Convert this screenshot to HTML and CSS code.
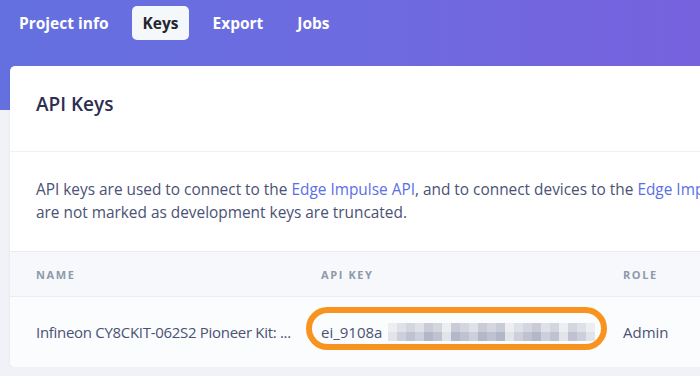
FILE: index.html
```html
<!DOCTYPE html>
<html lang="en">
<head>
  <meta charset="UTF-8" />
  <meta name="viewport" content="width=device-width, initial-scale=1.0"/>
  <title>Keys – Edge Impulse</title>
  <link rel="stylesheet" href="styles.css">
</head>
<body>
  <header class="hero">
    <nav class="tabs">
      <a class="tab" href="#">Project info</a>
      <a class="tab active" href="#">Keys</a>
      <a class="tab" href="#">Export</a>
      <a class="tab" href="#">Jobs</a>
    </nav>
  </header>

  <main class="page">
    <section class="card">
      <div class="card-head">
        <h2>API Keys</h2>
      </div>

      <p class="intro">
        API keys are used to connect to the <a href="#">Edge Impulse API</a>, and to connect devices to the <a href="#">Edge Impulse remote management API</a>. Keys that<br>
        are not marked as development keys are truncated.
      </p>

      <div class="table">
        <div class="row head">
          <div class="cell">Name</div>
          <div class="cell">API key</div>
          <div class="cell">Role</div>
        </div>
        <div class="row">
          <div class="cell name">Infineon CY8CKIT-062S2 Pioneer Kit: ...</div>
          <div class="cell key">
            <span class="key-text">ei_9108a</span>
            <span class="mosaic">
              <i class="a"></i><i class="b"></i><i class="c"></i><i class="b"></i><i class="d"></i><i class="c"></i><i class="a"></i><i class="d"></i><i class="c"></i><i class="b"></i><i class="d"></i><i class="c"></i><i class="d"></i><i class="a"></i><i class="b"></i><i class="c"></i><i class="d"></i><i class="b"></i><i class="c"></i><i class="a"></i><i class="c"></i><i class="b"></i><i class="a"></i>
            </span>
            <span class="ring"></span>
          </div>
          <div class="cell">Admin</div>
        </div>
      </div>
    </section>
  </main>
</body>
</html>
```

FILE: styles.css
```css
body {
  font-family: "Open Sans", "Noto Sans", sans-serif;
  background-color: #f1f2f8;
  color: #4a5275;
  margin: 0;
  overflow: hidden;
}

.hero {
  height: 110px;
  background: linear-gradient(90deg, #6470df 0%, #6d6be0 50%, #7762de 100%);
}

.tabs {
  display: flex;
  align-items: center;
  padding: 6px 0 0 8px;
}

.tab {
  display: block;
  padding: 0 11px;
  line-height: 34px;
  border-radius: 5px;
  color: #ffffff;
  font-size: 15.5px;
  font-weight: 700;
  text-decoration: none;
  margin-right: 12px;
}

.tab.active {
  background-color: #f5f8fb;
  color: #24262f;
}

.page {
  margin-top: -44px;
  padding-left: 10px;
}

.card {
  width: 760px;
  background-color: #ffffff;
  border-radius: 5px;
  box-shadow: 0 1px 3px rgba(40, 45, 80, 0.07);
  overflow: hidden;
}

.card-head {
  height: 85px;
  border-bottom: 1px solid #eef0f3;
  display: flex;
  align-items: center;
  padding-left: 26px;
}

.card-head h2 {
  margin: 0;
  padding-bottom: 9px;
  font-size: 19px;
  font-weight: 600;
  color: #2c2e52;
}

.intro {
  margin: 0;
  padding: 26px 26px 27px;
  font-size: 15.4px;
  line-height: 23px;
  white-space: nowrap;
}

.intro a {
  color: #5a6fe6;
  text-decoration: none;
}

.table {
  border-top: 1px solid #e9ecf1;
}

.row {
  display: grid;
  grid-template-columns: 285px 302px 1fr;
  height: 70px;
  background-color: #fbfcfd;
}

.row.head {
  height: 44px;
  background-color: #f6f8fb;
  border-bottom: 1px solid #e9ecf1;
}

.cell {
  display: flex;
  align-items: center;
  padding-left: 26px;
  font-size: 15px;
  white-space: nowrap;
}

.cell.name {
  letter-spacing: -0.3px;
}

.row.head .cell {
  font-size: 11px;
  font-weight: 700;
  letter-spacing: 1.6px;
  text-transform: uppercase;
  color: #8e98ab;
}

.cell.key {
  position: relative;
}

.mosaic {
  display: flex;
  margin-left: 6px;
  height: 18px;
}

.mosaic i {
  display: block;
  width: 9px;
  height: 18px;
}

.mosaic .a { background: linear-gradient(#eceef2 50%, #e2e4ea 50%); }
.mosaic .b { background: linear-gradient(#dfe1e8 50%, #cdd0da 50%); }
.mosaic .c { background: linear-gradient(#d3d6df 50%, #bfc3d1 50%); }
.mosaic .d { background: linear-gradient(#c9ccd7 50%, #b3b8c8 50%); }

.ring {
  position: absolute;
  left: 11px;
  top: 10px;
  width: 289px;
  height: 31px;
  border: 6px solid #f7931e;
  border-radius: 22px;
}
```
